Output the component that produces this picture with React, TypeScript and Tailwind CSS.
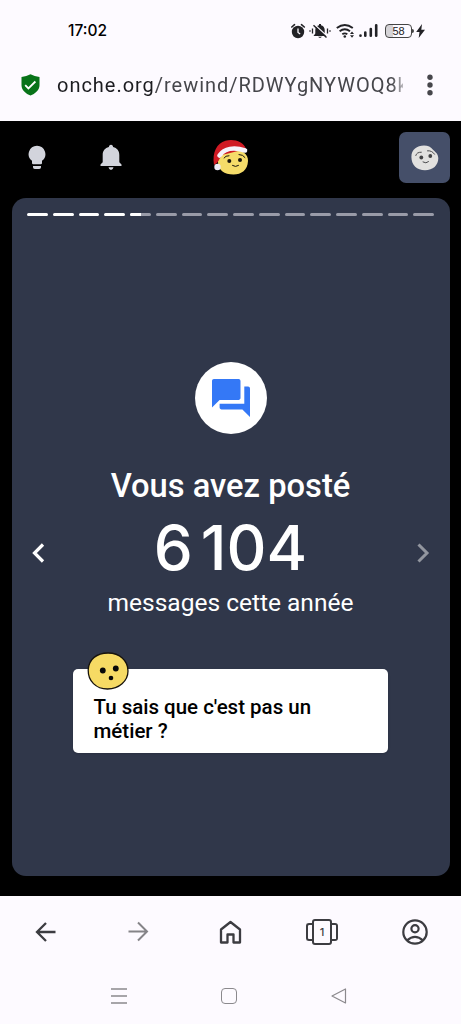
const SEGMENTS = Array.from({ length: 16 }, (_, i) => (i < 4 ? 100 : i === 4 ? 55 : 0));

const StatusBar = () => (
    <div className="flex h-[61px] items-center pl-[68px] pr-[36px]">
        <span className="font-['Inter',sans-serif] text-[15.5px] font-[450] text-black">17:02</span>
        <div className="ml-auto flex items-center text-[#222226]">
            <svg className="h-4 w-4" viewBox="0 0 16 16" fill="none" stroke="currentColor">
                <circle cx="7" cy="9" r="6.2" fill="currentColor" stroke="none" />
                <path d="M.8 4 3.5 1.7M13.3 4l-2.8-2.3" strokeWidth="1.6" strokeLinecap="round" />
                <path d="M7 5.5v4l2.2 1.5" stroke="#fdfaff" strokeWidth="1.3" />
            </svg>
            <svg className="ml-[2px] h-4 w-[22px]" viewBox="0 0 22 16">
                <path d="M4.5 13 6.3 10.5V7C6.3 4.2 8 2.6 10 2.2V1h2v1.2C14 2.6 15.7 4.2 15.7 7v3.5l1.8 2.5ZM9 13.8h4q-2 2.3-4 0Z" fill="currentColor" />
                <path d="M6 2 18.5 13.5" stroke="#fdfaff" strokeWidth="1.3" />
                <path d="M4.5 2.3 17.5 14.5" stroke="currentColor" strokeWidth="1.5" />
                <path d="M3.5 5.5v5M18.5 5.5v5M1 7.3v1.4M21 7.3v1.4" stroke="currentColor" strokeWidth="1.3" />
            </svg>
            <svg className="ml-[5px] h-4 w-[19px]" viewBox="0 0 19 16" fill="none" stroke="currentColor" strokeWidth="1.9">
                <path d="M.8 5q8-6.2 16 0M3.6 8.3q5.2-4 10.4 0M6.3 11.3q2.5-1.8 5 0" />
                <circle cx="8.8" cy="13.5" r="1.3" fill="currentColor" stroke="none" />
                <path d="m14 11 2-2.5 2 2.5ZM14 12.3l2 2.5 2-2.5Z" fill="currentColor" stroke="none" />
            </svg>
            <svg className="ml-[4px] h-4 w-[19px]" viewBox="0 0 19 16" fill="none" stroke="currentColor" strokeWidth="2.6" strokeLinecap="round">
                <path d="M1.5 12.5v.3M6.3 9.5v3.3M11.8 6v6.8M17.2 2.3v10.5" />
            </svg>
            <div className="ml-[7px] flex h-[14px] w-[27px] items-center justify-center rounded-[4px] border border-[#444] bg-linear-to-r from-[#d5d3d7] from-30% to-transparent to-30% pt-px font-['Liberation_Sans',sans-serif] text-[11px] leading-none">
                58
            </div>
            <div className="h-1 w-[2px] rounded-r bg-[#444]" />
            <svg className="ml-[2px] h-4 w-[9px]" viewBox="0 0 9 16" fill="currentColor">
                <path d="M6 1 .2 9h3.3l-.8 6L9 6.7H5.3Z" />
            </svg>
        </div>
    </div>
);

const AddressBar = () => (
    <div className="flex h-[60px] items-start pl-[21px] pr-[28px] pt-[10px]">
        <svg className="mt-[3px] h-[22px] w-[19px]" viewBox="0 0 19 22">
            <path d="M9.5.2q4 2 9 2.9v8.1c0 4.8-4.5 8.5-9 10.4-4.5-1.9-9-5.6-9-10.4V3.1q5-.9 9-2.9Z" fill="#087319" />
            <path d="m4.2 11.2 3.2 3.3 7-7" fill="none" stroke="#fff" strokeWidth="1.8" />
        </svg>
        <div className="ml-[17px] w-[346px] overflow-hidden whitespace-nowrap font-['Roboto',sans-serif] text-xl leading-7 tracking-[0.97px] text-[#46464b] [mask-image:linear-gradient(to_right,#000_335px,transparent_352px)]">
            <span className="text-[#1c1c20]">onche.org</span>/rewind/RDWYgNYWOQ8k
        </div>
        <svg className="ml-auto h-7 w-[6px]" viewBox="0 0 6 28" fill="#46464b">
            <circle cx="3" cy="6.3" r="2.7" />
            <circle cx="3" cy="14" r="2.7" />
            <circle cx="3" cy="21.7" r="2.7" />
        </svg>
    </div>
);

const SiteHeader = () => (
    <header className="flex h-[77px] items-start pl-[28px] pr-[11px] pt-[11px]">
        <svg className="mt-[13px] h-[26px] w-[18px]" viewBox="0 0 18 26" fill="#d2d4dc">
            <path d="M9 .7a8.4 8.4 0 0 0-5 15.1V18q0 1.2 1.2 1.2h7.6q1.2 0 1.2-1.2v-2.2A8.4 8.4 0 0 0 9 .7ZM5 21h8v1.2q0 1.8-1.8 1.8H6.8Q5 24 5 22.2Z" />
        </svg>
        <svg className="ml-[54px] mt-[12px] h-[27px] w-[22px]" viewBox="0 0 22 27" fill="#d2d4dc">
            <path d="M11 .8c1.4 0 2.1 1 2.1 2.3 4 1 6.2 4 6.2 7.8v7.3l2.2 2.4v1.3H.5v-1.3l2.2-2.4v-7.3c0-3.8 2.2-6.8 6.2-7.8C8.9 1.8 9.6.8 11 .8ZM8.5 23.2h5q-.5 2.7-2.5 2.7t-2.5-2.7Z" />
        </svg>
        <svg className="ml-[90px] mt-[6px] h-[38px] w-[38px]" viewBox="0 0 38 38">
            <path d="M6 23.5c1-9 8-12.5 15-12.5 8.5 0 15.500 5 15 12-.4 9-6.5 13.5-14.5 13.5C12.5 36.5 5.5 32 6 23.5Z" fill="#f5dc69" />
            <path d="M2 27C0 14 5 5 13.5 2.7c8-2 18 .3 20.5 8.3L10 17l-5 8Z" fill="#d01a24" />
            <path d="M7.5 17.5C12.5 10.5 22 9 33 12.5" fill="none" stroke="#f5f2fb" strokeWidth="4.6" strokeLinecap="round" />
            <circle cx="5.5" cy="29" r="3.2" fill="#eeecf8" />
            <g fill="none" stroke="#17130d" strokeWidth="1" strokeLinecap="round">
                <path d="M12 20q1.500-2.500 5-2.300M27 16.500q4 0 6 3M20.500 27.500q3 2 6 0" />
            </g>
            <circle cx="17.3" cy="22.9" r="2" fill="#17130d" />
            <circle cx="28" cy="21.9" r="2" fill="#17130d" />
        </svg>
        <div className="ml-auto flex size-[51px] items-center justify-center rounded-[7px] bg-[#454f69]">
            <svg className="h-[26px] w-[28px]" viewBox="0 0 28 26">
                <path d="M.4 12C.4 4.5 6 .5 13 .5c4 0 7 1.5 9 4.3 2 2 5.300 4 5.300 8.500 0 7-5.300 12-13.300 12C6 25.300.4 20 .4 12Z" fill="#e2e1df" />
                <g fill="none" stroke="#4b4b4d" strokeWidth="1" strokeLinecap="round">
                    <path d="M4.800 10.500q.8-3.500 5.500-3.300M16.500 5.800q4.500-.5 7 3.400M12 17q3 2 5.500-.3" />
                </g>
                <circle cx="10.3" cy="12.5" r="1.9" fill="#424244" />
                <circle cx="19.3" cy="11" r="1.9" fill="#424244" />
            </svg>
        </div>
    </header>
);

const Bubble = () => (
    <div className="relative mx-auto h-[84px] w-[315px] rounded-[5px] bg-white pl-[20.5px] pt-[27px] font-['Roboto',sans-serif] text-[20.5px] font-medium leading-[23.5px] text-black shadow">
        <svg className="absolute left-[14px] top-[-17px] h-[38px] w-[42px]" viewBox="0 0 42 38">
            <path d="M1.2 18C1.5 7 10 1 21 1c12 0 20 8 20 18S32 37 20.5 37C9 37 1 29 1.2 18Z" fill="#f6da64" stroke="#17130d" strokeWidth="1.3" />
            <circle cx="15.8" cy="18.5" r="2.9" fill="#080808" />
            <circle cx="28.8" cy="16.5" r="2.9" fill="#080808" />
            <circle cx="24" cy="26" r="2.3" fill="#080808" />
        </svg>
        Tu sais que c'est pas un
        <br />
        métier ?
    </div>
);

const RewindCard = () => (
    <main className="mx-auto h-[678px] w-[438px] rounded-[14px] bg-[#30374a] pt-[15px] font-['Roboto',sans-serif] text-white">
        <div className="mx-auto flex w-[407px] gap-[5px]">
            {SEGMENTS.map((progress, i) => (
                <div key={i} className="h-[3px] flex-1 overflow-hidden rounded-full bg-[#999ba8]">
                    <div className="h-full bg-white" style={{ width: `${progress}%` }} />
                </div>
            ))}
        </div>
        <div className="mx-auto mt-[146px] flex size-[72px] items-center justify-center rounded-full bg-white">
            <svg className="size-[38px]" viewBox="2 2 20 20" fill="#3478f6">
                <path d="M21 6h-2v9H6v2c0 .55.45 1 1 1h11l4 4V7c0-.55-.45-1-1-1zm-4 6V3c0-.55-.45-1-1-1H3c-.55 0-1 .45-1 1v14l4-4h10c.55 0 1-.45 1-1z" />
            </svg>
        </div>
        <div className="mt-[32px] flex items-center justify-between px-[19px]">
            <svg className="mt-[22px] h-[22px] w-[14px]" viewBox="0 0 14 22" fill="none" stroke="#fff" strokeWidth="3.2">
                <path d="m12 2.5-8.500 8.500 8.500 8.500" />
            </svg>
            <div className="text-center">
                <h1 className="text-[32.7px] font-medium leading-[40px]">Vous avez posté</h1>
                <p className="pb-px pt-[2px] font-['Inter',sans-serif] text-[62px] font-medium leading-[80px]">
                    6<span className="-mr-[3px]">{"\u202f"}</span>104
                </p>
                <p className="text-[24.5px] leading-[28px]">messages cette année</p>
            </div>
            <svg className="mt-[22px] h-[22px] w-[14px]" viewBox="0 0 14 22" fill="none" stroke="#92969f" strokeWidth="3">
                <path d="m2.5 2.500 8.500 8.500-8.500 8.500" />
            </svg>
        </div>
        <div className="pt-[52px]">
            <Bubble />
        </div>
    </main>
);

const BrowserNav = () => (
    <nav className="flex h-[72px] items-center pl-[32px] text-[#3c3c41]">
        <svg className="size-[26px]" viewBox="0 0 26 26" fill="none" stroke="currentColor" strokeWidth="2.3">
            <path d="M23.5 13H5M14 4l-9 9 9 9" />
        </svg>
        <svg className="ml-[67px] size-[26px]" viewBox="0 0 26 26" fill="none" stroke="#858488" strokeWidth="2">
            <path d="M3.5 12.5h19M13 3.5l9 9-9 9" />
        </svg>
        <svg className="ml-[66px] size-[26px]" viewBox="0 0 26 26" fill="none" stroke="currentColor" strokeWidth="2.3" strokeLinejoin="round">
            <path d="M4 10.5 13.500 3l9.500 7.500v13h-6.500v-8h-6v8H4Z" />
        </svg>
        <div className="ml-[63px] flex items-center">
            <div className="h-[18px] w-[6px] rounded-l-[3px] border-2 border-r-0 border-current" />
            <div className="flex h-[26px] w-5 items-center justify-center rounded-[3px] border-2 border-current font-['Inter',sans-serif] text-[11px] font-medium">
                1
            </div>
            <div className="h-[18px] w-[6px] rounded-r-[3px] border-2 border-l-0 border-current" />
        </div>
        <svg className="ml-[64px] size-[26px]" viewBox="0 0 26 26" fill="none" stroke="currentColor" strokeWidth="2.2">
            <circle cx="13" cy="13" r="11.7" />
            <circle cx="13" cy="9.8" r="3.6" />
            <path d="M5 21.3q8-7 16 0" />
        </svg>
    </nav>
);

const SystemNav = () => (
    <div className="flex h-14 items-center justify-between pl-[110px] pr-[114px]">
        <svg className="h-[18px] w-[18px]" viewBox="0 0 18 18" fill="none" stroke="#8b898d" strokeWidth="1.4">
            <path d="M1 2h16M1 9h16M1 16h16" />
        </svg>
        <div className="mr-px size-[16px] rounded-[4px] border-[1.5px] border-[#8b898d]" />
        <svg className="h-[18px] w-[16px]" viewBox="0 0 16 18" fill="none" stroke="#8b898d" strokeWidth="1.2" strokeLinejoin="round">
            <path d="M1 9 14.5 2v14Z" />
        </svg>
    </div>
);

export default function App() {
    return (
        <div className="h-[1024px] w-[461px] overflow-hidden bg-[#fdfaff]">
            <StatusBar />
            <AddressBar />
            <div className="h-[775px] bg-black">
                <SiteHeader />
                <RewindCard />
            </div>
            <BrowserNav />
            <SystemNav />
        </div>
    );
}
